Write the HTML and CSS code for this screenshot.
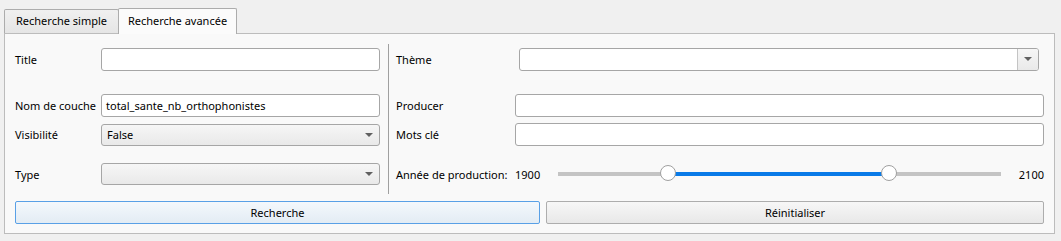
FILE: index.html
```html
<!DOCTYPE html>
<html lang="fr">
<head>
    <meta charset="UTF-8">
    <title>Recherche avancée</title>
    <link rel="stylesheet" href="styles.css">
</head>
<body>
    <div class="tabs">
        <div class="tab">Recherche simple</div>
        <div class="tab active">Recherche avancée</div>
    </div>
    <div class="panel">
        <div class="columns">
            <div class="column left">
                <div class="row first">
                    <span class="label">Title</span>
                    <div class="field"></div>
                </div>
                <div class="row second">
                    <span class="label">Nom de couche</span>
                    <div class="field">total_sante_nb_orthophonistes</div>
                </div>
                <div class="row third">
                    <span class="label">Visibilité</span>
                    <div class="combo">False<span class="arrow"></span></div>
                </div>
                <div class="row fourth">
                    <span class="label">Type</span>
                    <div class="combo"><span class="arrow"></span></div>
                </div>
            </div>
            <div class="separator"></div>
            <div class="column right">
                <div class="row first">
                    <span class="label theme">Thème</span>
                    <div class="combo editable">
                        <div class="edit"></div>
                        <div class="drop"><span class="arrow"></span></div>
                    </div>
                </div>
                <div class="row second">
                    <span class="label">Producer</span>
                    <div class="field"></div>
                </div>
                <div class="row third">
                    <span class="label">Mots clé</span>
                    <div class="field"></div>
                </div>
                <div class="row fourth slider-row">
                    <span class="label">Année de production:</span>
                    <span class="value min">1900</span>
                    <div class="track">
                        <div class="range" style="left: 25%; width: 50%;"></div>
                        <div class="handle" style="left: 25%;"></div>
                        <div class="handle" style="left: 75%;"></div>
                    </div>
                    <span class="value max">2100</span>
                </div>
            </div>
        </div>
        <div class="buttons">
            <button class="btn focused">Recherche</button>
            <button class="btn">Réinitialiser</button>
        </div>
    </div>
</body>
</html>
```

FILE: styles.css
```css
body {
    margin: 0;
    background: #f0f0f0;
    color: #000;
    font-family: "Noto Sans", sans-serif;
    font-size: 11px;
}
.tabs {
    display: flex;
    align-items: flex-end;
    padding: 8px 0 0 4px;
    height: 25px;
}
.tab {
    box-sizing: border-box;
    width: 115px;
    height: 24px;
    line-height: 22px;
    text-align: center;
    border: 1px solid #acacac;
    border-bottom: none;
    border-radius: 2px 2px 0 0;
    background: linear-gradient(#f0f0f0, #e5e5e5);
}
.tab.active {
    width: 119px;
    height: 26px;
    line-height: 24px;
    margin-left: -1px;
    margin-bottom: -1px;
    background: #fbfbfb;
    position: relative;
    z-index: 1;
}
.panel {
    box-sizing: border-box;
    width: 1051px;
    margin-left: 4px;
    border: 1px solid #bcbcbc;
    background: #f9f9f9;
    padding: 10px 10px 9px 10px;
}
.columns {
    display: flex;
    height: 150px;
}
.column {
    display: flex;
    flex-direction: column;
}
.column.left {
    width: 365px;
}
.column.right {
    flex: 1;
}
.separator {
    width: 1px;
    background: #a0a0a0;
    margin: 0 7px 0 8px;
}
.row {
    display: flex;
    align-items: center;
    height: 23px;
}
.row.first { margin-top: 4px; }
.row.second { margin-top: 23px; }
.row.third { margin-top: 6px; }
.row.fourth { margin-top: 16px; height: 24px; }
.label {
    width: 86px;
    flex-shrink: 0;
}
.right .label {
    width: 119px;
}
.right .label.theme {
    width: 123px;
}
.field, .combo {
    box-sizing: border-box;
    flex: 1;
    height: 23px;
    line-height: 21px;
    border: 1px solid #a6a6a6;
    border-radius: 3px;
    background: #fff;
    padding: 0 4px;
    white-space: nowrap;
    overflow: hidden;
}
.combo {
    position: relative;
    height: 22px;
    line-height: 20px;
    padding-left: 5px;
    background: linear-gradient(#f6f6f6, #e9e9e9);
}
.row.fourth .combo {
    margin: 1px 0;
}
.arrow {
    position: absolute;
    right: 6px;
    top: 8px;
    width: 0;
    height: 0;
    border-left: 4px solid transparent;
    border-right: 4px solid transparent;
    border-top: 4px solid #606060;
}
.combo.editable {
    display: flex;
    padding: 0;
    height: 23px;
    background: #fff;
    margin-right: 5px;
}
.combo.editable .edit {
    flex: 1;
}
.combo.editable .drop {
    position: relative;
    width: 20px;
    border-left: 1px solid #c4c4c4;
    background: linear-gradient(#f6f6f6, #e9e9e9);
}
.combo.editable .arrow {
    right: 6px;
}
.value.min {
    width: 24px;
}
.value.max {
    width: 26px;
    text-align: right;
}
.track {
    position: relative;
    flex: 1;
    height: 4px;
    margin: 0 17px 0 19px;
    background: #c4c4c4;
}
.range {
    position: absolute;
    top: 0;
    height: 4px;
    background: #0a7be8;
}
.handle {
    position: absolute;
    top: -7px;
    width: 16px;
    height: 16px;
    margin-left: -9px;
    box-sizing: border-box;
    border: 1px solid #a0a0a0;
    border-radius: 50%;
    background: #fff;
}
.buttons {
    display: flex;
    gap: 6px;
    margin-top: 7px;
}
.btn {
    flex: 1;
    height: 23px;
    margin: 0;
    border: 1px solid #adadad;
    border-radius: 2px;
    background: linear-gradient(#f7f7f7, #e8e8e8);
    font-family: inherit;
    font-size: 11px;
    color: #000;
    padding: 0;
}
.btn.focused {
    flex: 0 0 525px;
    border-color: #59a0e6;
    background: linear-gradient(#f4f8fc, #e3ecf4);
}
```
